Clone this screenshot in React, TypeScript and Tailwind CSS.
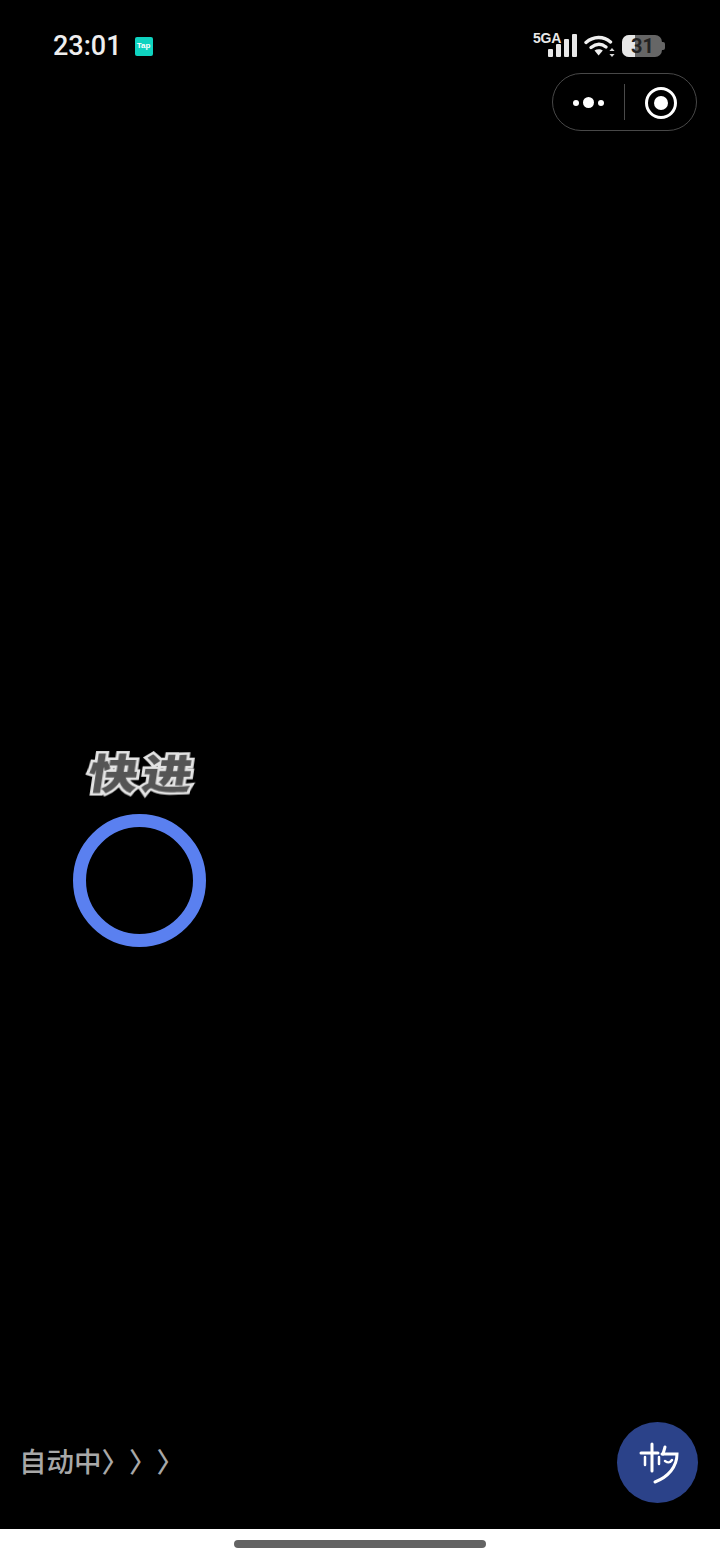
import React from 'react';

const cjk = "font-['Noto_Sans_CJK_SC','Noto_Sans',sans-serif]";

function TapBadge() {
  return (
    <div className="ml-[13px] flex h-[19px] w-[18px] items-center justify-center rounded-[2px] bg-[#0fd3c0]">
      <span className="font-['Liberation_Sans',sans-serif] text-[8px] font-bold leading-none text-white">Tap</span>
    </div>
  );
}

function Signal() {
  return (
    <div className="relative h-[24px] w-[44px]">
      <span className="absolute left-0 top-[-3px] font-['Liberation_Sans',sans-serif] text-[14px] font-bold leading-none tracking-[-0.2px] text-[#e8e8e8]">5GA</span>
      <svg viewBox="0 0 44 24" className="absolute inset-0 h-[24px] w-[44px]" fill="#e8e8e8">
        <rect x="15" y="15" width="5" height="8" rx="1" />
        <rect x="23" y="10" width="5" height="13" rx="1" />
        <rect x="31" y="5" width="5" height="18" rx="1" />
        <rect x="39" y="0" width="5" height="23" rx="1" />
      </svg>
    </div>
  );
}

function Wifi() {
  return (
    <svg viewBox="0 0 32 24" className="ml-[7px] h-[24px] w-[32px]" fill="none">
      <path d="M2 8.5C9.5 2 19.5 2 26.5 8" stroke="#f0f0f0" strokeWidth="3.4" strokeLinecap="round" />
      <path d="M7 13.5C12 9.5 17.5 9.5 22 13" stroke="#f0f0f0" strokeWidth="3.4" strokeLinecap="round" />
      <path d="M10.5 16.5C13 14.8 16.5 14.8 18.8 16.5L14.6 21.5Z" fill="#f0f0f0" />
      <path d="M28 14l2.6 3h-5.2zM28 23l-2.6-3h5.2z" fill="#d8d8d8" />
    </svg>
  );
}

function Battery() {
  return (
    <div className="relative ml-[6px] flex h-[22px] w-[43px] items-center">
      <div className="flex h-[22px] w-[40px] overflow-hidden rounded-[7px] bg-[#666666]">
        <div className="w-[13px] bg-[#e6e6e6]" />
      </div>
      <div className="h-[8px] w-[3px] rounded-r-[2px] bg-[#666666]" />
      <span className="absolute left-[9px] top-0 font-['Roboto',sans-serif] text-[20px] font-bold leading-[22px] text-[#222222]">31</span>
    </div>
  );
}

function Capsule() {
  return (
    <div className="flex h-[58px] w-[145px] items-center rounded-full border border-[#484848]">
      <div className="flex w-[71px] items-center justify-center gap-[4px] pt-px">
        <span className="h-[6px] w-[6px] rounded-full bg-white" />
        <span className="h-[11px] w-[11px] rounded-full bg-white" />
        <span className="h-[6px] w-[6px] rounded-full bg-white" />
      </div>
      <div className="h-[36px] w-px bg-[#4a4a4a]" />
      <div className="flex flex-1 items-center justify-center pt-px">
        <div className="flex h-[32px] w-[32px] items-center justify-center rounded-full border-[3px] border-white">
          <span className="h-[14px] w-[14px] rounded-full bg-white" />
        </div>
      </div>
    </div>
  );
}

function Logo() {
  return (
    <svg viewBox="0 0 81 81" className="h-[81px] w-[81px]" fill="none" stroke="#ffffff" strokeLinecap="round">
      <path d="M24 31H41" strokeWidth="3" />
      <path d="M35 22V49" strokeWidth="3" />
      <path d="M28 35V43" strokeWidth="2.5" />
      <path d="M42 35V42" strokeWidth="2.5" />
      <path d="M45 32H60C60 45 51 55 38 60" strokeWidth="3" />
      <path d="M48 25L46 32" strokeWidth="3" />
      <path d="M48 39C51 41 53 41 55 38" strokeWidth="2.5" />
    </svg>
  );
}

export default function App() {
  return (
    <div className="flex h-[1559px] w-[720px] flex-col bg-white">
      <div className="flex flex-1 flex-col bg-black">
        {/* Status bar */}
        <div className="flex h-[73px] items-center justify-between pl-[53px] pr-[55px] pt-[19px]">
          <div className="flex items-center">
            <span className="font-['Roboto',sans-serif] text-[27px] font-medium leading-none text-[#eeeeee]">23:01</span>
            <TapBadge />
          </div>
          <div className="flex items-center">
            <Signal />
            <Wifi />
            <Battery />
          </div>
        </div>

        {/* Capsule */}
        <div className="flex justify-end pr-[23px]">
          <Capsule />
        </div>

        {/* Loader */}
        <div className="ml-[73px] mt-[618px] flex w-[133px] flex-col items-center">
          <span
            className={`${cjk} ml-[7px] h-[45px] -skew-x-[7deg] scale-y-[0.82] text-[50px] font-black leading-[45px] tracking-[4px] text-[#555555] blur-[0.6px] [-webkit-text-stroke:6px_#e4e4e4] [paint-order:stroke_fill]`}
          >
            快进
          </span>
          <div className="mt-[20px] h-[133px] w-[133px] rounded-full border-[13px] border-[#5a80f0]" />
        </div>

        {/* Bottom row */}
        <div className="mt-auto flex items-center justify-between pb-[26px] pl-[19px] pr-[22px]">
          <span className={`${cjk} -mt-[4px] text-[27.5px] font-medium leading-none text-[#a8a8a8] [text-spacing-trim:space-all]`}>自动中〉〉〉</span>
          <div className="h-[81px] w-[81px] rounded-full bg-[#2b4289]">
            <Logo />
          </div>
        </div>
      </div>

      {/* Home indicator */}
      <div className="flex h-[30px] justify-center pt-[11px]">
        <div className="h-[8px] w-[252px] rounded-full bg-[#636363]" />
      </div>
    </div>
  );
}
